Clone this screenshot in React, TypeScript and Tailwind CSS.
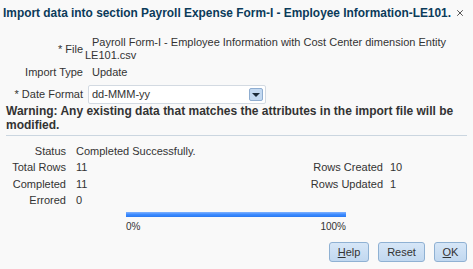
import { X } from 'lucide-react';

function Cell({ children, right }: { children?: React.ReactNode; right?: boolean }) {
  return <div className={right ? 'text-right whitespace-nowrap' : 'whitespace-nowrap'}>{children}</div>;
}

export default function App() {
  return (
    <div className="w-[473px] h-[269px] bg-[#f9f9f9] text-[#333] text-[11px] leading-[13px] font-['Liberation_Sans',_Arial,_sans-serif] relative overflow-hidden">
      <div className="flex items-center justify-between pl-[3px] pr-[8px] pt-[6px] h-[20px]">
        <h1 className="text-[11.9px] font-bold text-[#0b3b5a] whitespace-nowrap">
          Import data into section Payroll Expense Form-I - Employee Information-LE101.
        </h1>
        <X className="w-[10px] h-[10px] text-[#333] shrink-0" strokeWidth={2} />
      </div>

      <div className="grid grid-cols-[83px_1fr] gap-x-[2px] mt-[16px] pr-[8px]">
        <div className="text-right self-center pt-[1px]">* File</div>
        <div className="indent-[7px] leading-[13px]">
          Payroll Form-I - Employee Information with Cost Center dimension Entity LE101.csv
        </div>

        <div className="text-right mt-[4px]">Import Type</div>
        <div className="mt-[4px] pl-[7px]">Update</div>

        <div className="text-right self-center mt-[6px]">* Date Format</div>
        <div className="mt-[6px] pl-[3px]">
          <div className="w-[178px] h-[19px] bg-white border border-[#d3dae2] rounded-[2px] flex items-center justify-between pl-[3px] pr-[2px]">
            <span>dd-MMM-yy</span>
            <div className="w-[14px] h-[13px] rounded-[2px] border border-[#8fadd0] bg-[#c3d9f1] flex items-center justify-center">
              <div className="w-0 h-0 border-l-[4px] border-r-[4px] border-t-[4px] border-l-transparent border-r-transparent border-t-[#1c2b39]" />
            </div>
          </div>
        </div>
      </div>

      <p className="px-[6px] mt-[0px] text-[12px] leading-[14px] font-bold text-[#333]">
        Warning: Any existing data that matches the attributes in the import file will be modified.
      </p>

      <div className="mx-[6px] mt-[3px] border-t border-[#cbd6e0]" />

      <div className="grid grid-cols-[76px_230px_77px_1fr] auto-rows-[16.5px] items-center mt-[7px]">
        <div className="text-right pr-[10px]">Status</div>
        <Cell>Completed Successfully.</Cell>
        <Cell />
        <Cell />

        <div className="text-right pr-[10px] whitespace-nowrap">Total Rows</div>
        <Cell>11</Cell>
        <Cell right>Rows Created</Cell>
        <div className="pl-[7px]">10</div>

        <div className="text-right pr-[10px]">Completed</div>
        <Cell>11</Cell>
        <Cell right>Rows Updated</Cell>
        <div className="pl-[7px]">1</div>

        <div className="text-right pr-[10px]">Errored</div>
        <Cell>0</Cell>
        <Cell />
        <Cell />
      </div>

      <div className="ml-[126px] w-[220px] mt-[3px]">
        <div className="h-[5px] bg-gradient-to-b from-[#7fb2ff] via-[#3d8bff] to-[#2a7af2]" />
        <div className="flex justify-between mt-[3px] text-[10px] text-[#333]">
          <span>0%</span>
          <span>100%</span>
        </div>
      </div>

      <div className="flex justify-end gap-[9px] pr-[6px] mt-[9px]">
        <button className="w-[40px] h-[20px] rounded-[3px] border border-[#8fb1d3] bg-gradient-to-b from-[#d6e6f7] to-[#c1d8f0] text-[11px] text-[#333]">
          <span className="underline">H</span>elp
        </button>
        <button className="w-[47px] h-[20px] rounded-[3px] border border-[#8fb1d3] bg-gradient-to-b from-[#d6e6f7] to-[#c1d8f0] text-[11px] text-[#333]">
          Reset
        </button>
        <button className="w-[33px] h-[20px] rounded-[3px] border border-[#8fb1d3] bg-gradient-to-b from-[#d6e6f7] to-[#c1d8f0] text-[11px] text-[#333]">
          <span className="underline">O</span>K
        </button>
      </div>
    </div>
  );
}
